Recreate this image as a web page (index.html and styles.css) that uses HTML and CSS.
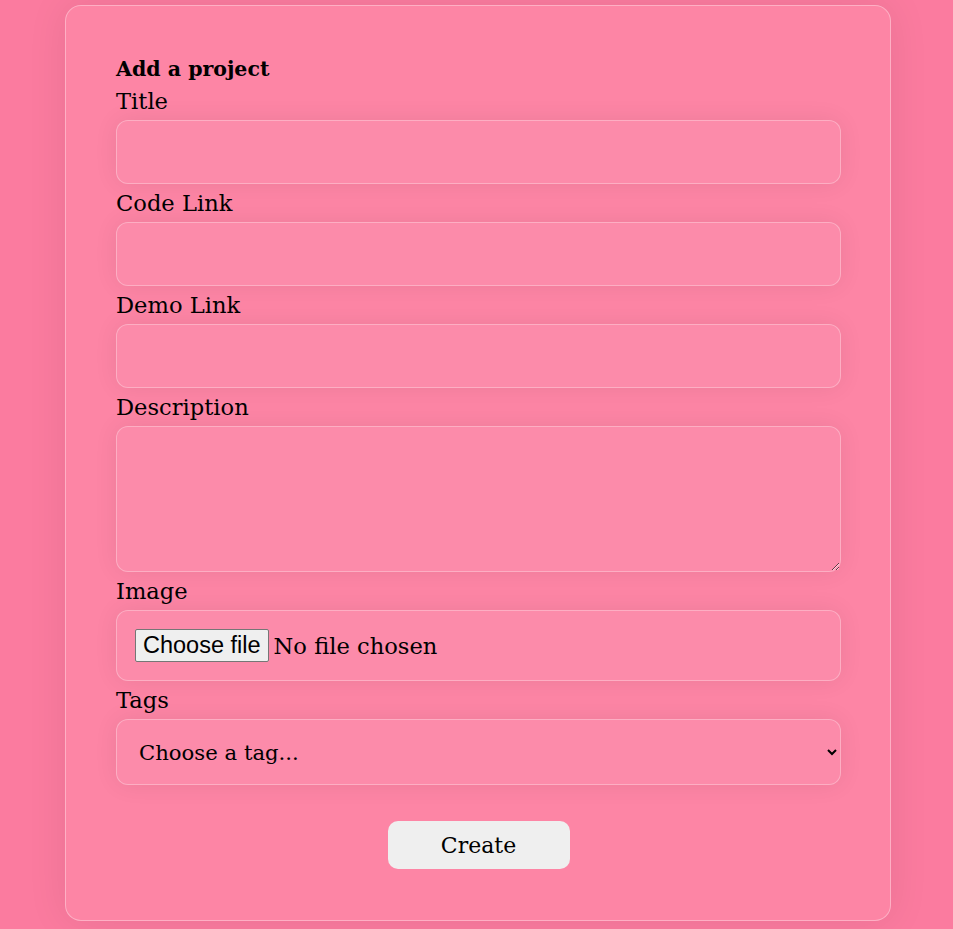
FILE: index.html
```html
<!DOCTYPE html>
<html lang="en">
<head>
<meta charset="utf-8">
<title>Add a project</title>
<link rel="stylesheet" href="styles.css">
</head>
<body>
<form class="card">
  <h2 class="heading">Add a project</h2>
  <label class="label" for="title">Title</label>
  <input class="field" id="title" type="text">
  <label class="label" for="code">Code Link</label>
  <input class="field" id="code" type="text">
  <label class="label" for="demo">Demo Link</label>
  <input class="field" id="demo" type="text">
  <label class="label" for="desc">Description</label>
  <textarea class="field area" id="desc"></textarea>
  <label class="label" for="image">Image</label>
  <label class="field file" for="image">
    <input class="file-input" id="image" type="file">
    <span class="file-btn">Choose file</span>
    <span class="file-name">No file chosen</span>
  </label>
  <label class="label" for="tags">Tags</label>
  <select class="field select" id="tags">
    <option>Choose a tag...</option>
  </select>
  <div class="actions">
    <button class="create" type="button">Create</button>
  </div>
</form>
</body>
</html>
```
FILE: styles.css
```css
html, body {
  margin: 0;
  padding: 0;
}
body {
  background: #fb7b9f;
  font-family: "DejaVu Serif", serif;
  color: #000;
  min-height: 929px;
  overflow: hidden;
}
.card {
  box-sizing: border-box;
  width: 826px;
  margin: 5px 0 0 65px;
  padding: 51px 49px 51px 50px;
  background: #fd85a5;
  border: 1px solid rgba(255, 255, 255, 0.35);
  border-radius: 16px;
  box-shadow: 0 0 40px rgba(0, 0, 0, 0.08);
  display: flex;
  flex-direction: column;
}
.heading {
  margin: 0;
  font-size: 20.5px;
  line-height: 25px;
  font-weight: bold;
}
.label {
  display: block;
  margin-top: 5px;
  padding-top: 1px;
  font-size: 22.6px;
  line-height: 26px;
}
.field {
  box-sizing: border-box;
  display: block;
  width: 100%;
  height: 64px;
  margin: 6px 0 0 0;
  padding: 18px;
  background: #fc8baa;
  border: 1px solid rgba(255, 255, 255, 0.3);
  border-radius: 12px;
  box-shadow: 0 0 24px rgba(0, 0, 0, 0.07);
  font-family: "DejaVu Serif", serif;
  font-size: 22px;
  color: #000;
  outline: none;
}
.area {
  height: 146px;
  resize: both;
}
.file {
  height: 71px;
  display: flex;
  align-items: center;
  gap: 5px;
  cursor: pointer;
}
.file-input {
  display: none;
}
.file-btn {
  box-sizing: border-box;
  height: 33px;
  padding: 0 7px;
  display: flex;
  align-items: center;
  font-family: "Liberation Sans", Arial, sans-serif;
  font-size: 23.5px;
  background: #efefef;
  border: 1px solid #767676;
  border-radius: 2px;
  color: #000;
}
.file-name {
  font-size: 22.6px;
  line-height: 26px;
}
.select {
  height: 66px;
  font-size: 21.2px;
  padding: 0 14px 0 18px;
}
.actions {
  display: flex;
  justify-content: center;
  margin-top: 36px;
}
.create {
  width: 182px;
  height: 48px;
  background: #efefef;
  border: none;
  border-radius: 10px;
  font-family: "DejaVu Serif", serif;
  font-size: 22px;
  color: #000;
}
```
